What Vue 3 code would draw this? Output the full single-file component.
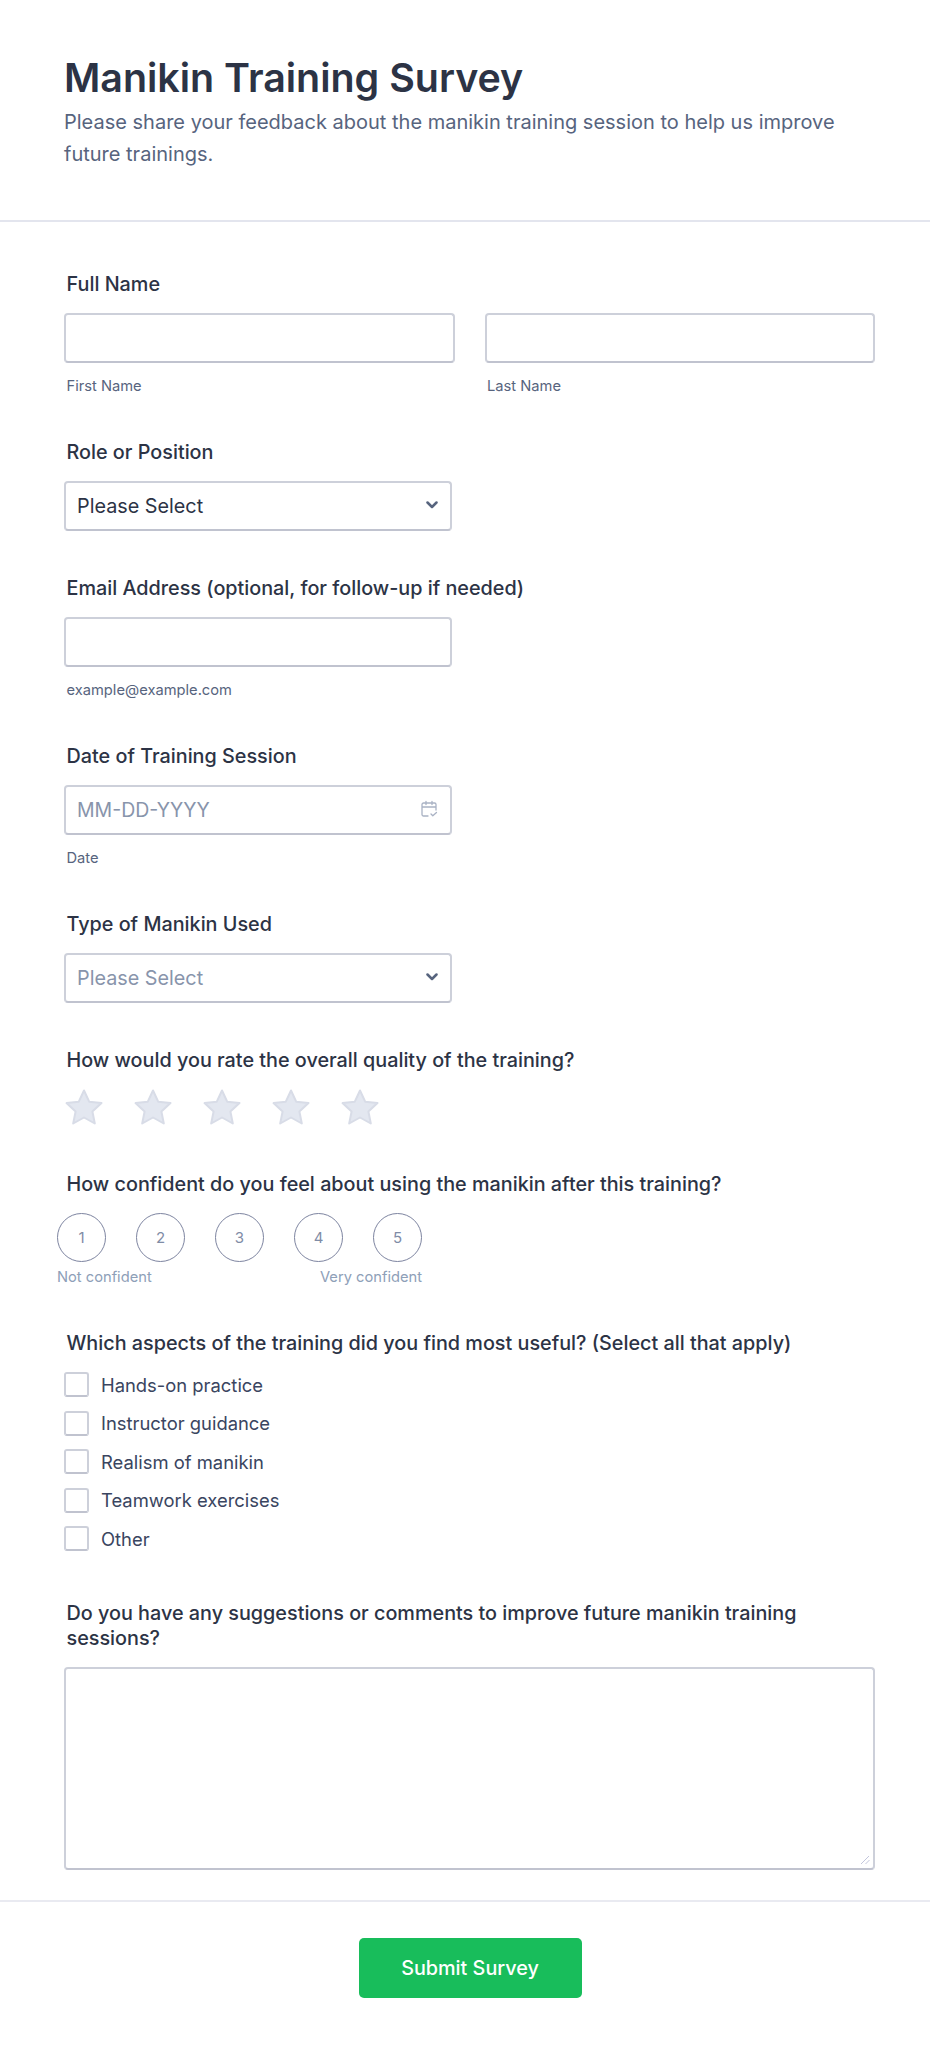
<template>
  <div class="page">
    <header class="head">
      <h1>Manikin Training Survey</h1>
      <p>Please share your feedback about the manikin training session to help us improve future trainings.</p>
    </header>

    <form class="form" @submit.prevent>
      <div class="field">
        <label class="label">Full Name</label>
        <div class="name-row">
          <div class="name-col">
            <input class="input" type="text" />
            <span class="hint">First Name</span>
          </div>
          <div class="name-col">
            <input class="input" type="text" />
            <span class="hint">Last Name</span>
          </div>
        </div>
      </div>

      <div class="field select-field">
        <label class="label">Role or Position</label>
        <div class="select-wrap">
          <select class="input select">
            <option>Please Select</option>
          </select>
          <svg class="chevron" viewBox="0 0 12 8" width="12" height="8"><path d="M1.500 1.500 6 6l4.500-4.500" /></svg>
        </div>
      </div>

      <div class="field">
        <label class="label">Email Address (optional, for follow-up if needed)</label>
        <input class="input short" type="email" />
        <span class="hint">example@example.com</span>
      </div>

      <div class="field">
        <label class="label">Date of Training Session</label>
        <div class="select-wrap">
          <input class="input" type="text" placeholder="MM-DD-YYYY" />
          <svg class="calendar" viewBox="0 0 18 18" width="18" height="18">
            <path d="M8 16H3.500A1.500 1.500 0 0 1 2 14.500V4.500A1.500 1.500 0 0 1 3.500 3h11A1.500 1.500 0 0 1 16 4.500V10M2 7h14M6 1.500v3M12 1.500v3M11 14l1.800 1.800L16.500 12.500" />
          </svg>
        </div>
        <span class="hint">Date</span>
      </div>

      <div class="field select-field">
        <label class="label">Type of Manikin Used</label>
        <div class="select-wrap">
          <select class="input select muted">
            <option>Please Select</option>
          </select>
          <svg class="chevron" viewBox="0 0 12 8" width="12" height="8"><path d="M1.500 1.500 6 6l4.500-4.500" /></svg>
        </div>
      </div>

      <div class="field rating-field">
        <label class="label">How would you rate the overall quality of the training?</label>
        <div class="stars">
          <svg v-for="n in 5" :key="n" viewBox="0 0 38 36" width="38" height="36">
            <path d="M19 1.500 24.200 12.700 36.500 14.100 27.400 22.500 29.800 34.500 19 28.500 8.200 34.500 10.600 22.500 1.500 14.100 13.800 12.700Z" />
          </svg>
        </div>
      </div>

      <div class="field">
        <label class="label">How confident do you feel about using the manikin after this training?</label>
        <div class="scale">
          <div class="circles">
            <span v-for="n in 5" :key="n" class="circle">{{ n }}</span>
          </div>
          <div class="scale-labels">
            <span>Not confident</span>
            <span>Very confident</span>
          </div>
        </div>
      </div>

      <div class="field useful-field">
        <label class="label">Which aspects of the training did you find most useful? (Select all that apply)</label>
        <div class="checks">
          <label v-for="item in aspects" :key="item" class="check">
            <input type="checkbox" />
            <span>{{ item }}</span>
          </label>
        </div>
      </div>

      <div class="field last-field">
        <label class="label">Do you have any suggestions or comments to improve future manikin training sessions?</label>
        <div class="area-wrap">
          <textarea class="area"></textarea>
          <svg class="grip" viewBox="0 0 10 10" width="10" height="10"><path d="M9 1 1 9M9.500 5 5.500 9" /></svg>
        </div>
      </div>
    </form>

    <footer class="foot">
      <button class="submit" type="button">Submit Survey</button>
    </footer>
  </div>
</template>

<script setup>
const aspects = [
  'Hands-on practice',
  'Instructor guidance',
  'Realism of manikin',
  'Teamwork exercises',
  'Other'
]
</script>

<style>
html, body {
  background: #fff;
}
</style>

<style scoped>
.page {
  width: 930px;
  height: 2047px;
  overflow: hidden;
  font-family: Inter, "Liberation Sans", sans-serif;
  color: #2c3345;
  background: #fff;
}

.head {
  height: 222px;
  box-sizing: border-box;
  padding: 56px 55px 0 64px;
  border-bottom: 2px solid #e3e5ee;
}

.head h1 {
  margin: 0;
  font-size: 39.400px;
  line-height: 44px;
  font-weight: 600;
}

.head p {
  margin: 6px 0 0;
  font-size: 20px;
  line-height: 32px;
  color: #57647e;
}

.form {
  padding: 50px 55px 0 64px;
}

.field {
  margin-bottom: 44px;
}

.select-field {
  margin-bottom: 45px;
}

.rating-field {
  margin-bottom: 47px;
}

.label {
  display: block;
  margin: 0 3px 16px 2.500px;
  font-size: 19.800px;
  line-height: 25px;
  font-weight: 500;
}

.name-row {
  display: flex;
  gap: 30px;
}

.name-col {
  flex: 1;
}

.input {
  display: block;
  width: 100%;
  height: 50px;
  box-sizing: border-box;
  padding: 0 11px;
  border: 2px solid #cdd0da;
  border-bottom-color: #c0c3cf;
  border-radius: 4px;
  background: #fff;
  font: inherit;
  font-size: 19.800px;
  color: #2c3345;
  outline: none;
}

.input::placeholder {
  font-size: 19.500px;
  color: #8894ab;
}

.short {
  width: 388px;
}

.hint {
  display: block;
  margin: 13px 3px 0 2.500px;
  font-size: 14.700px;
  line-height: 20px;
  color: #57647e;
}

.select-wrap {
  position: relative;
  width: 388px;
}

.select {
  appearance: none;
}

.muted {
  color: #8894ab;
}

.chevron {
  position: absolute;
  top: 20px;
  right: 14px;
  fill: none;
  stroke: #57647e;
  stroke-width: 2.500;
  stroke-linecap: round;
  stroke-linejoin: round;
}

.calendar {
  position: absolute;
  top: 15px;
  right: 14px;
  fill: none;
  stroke: #a9b2c4;
  stroke-width: 1.300;
  stroke-linecap: round;
  stroke-linejoin: round;
}

.stars {
  display: flex;
  gap: 31px;
  margin-left: 1px;
}

.stars svg {
  fill: #e3e7f0;
  stroke: #d8dce7;
  stroke-width: 2;
  stroke-linejoin: round;
}

.scale {
  width: 365px;
  margin-left: -7px;
}

.circles {
  display: flex;
  gap: 30px;
}

.circle {
  display: flex;
  align-items: center;
  justify-content: center;
  width: 49px;
  height: 49px;
  box-sizing: border-box;
  border: 1px solid #7d84a0;
  border-radius: 50%;
  font-size: 15px;
  color: #7f8ca6;
}

.scale-labels {
  display: flex;
  justify-content: space-between;
  margin-top: 5px;
  font-size: 14.700px;
  line-height: 20px;
  color: #8ea0b8;
}

.checks {
  display: flex;
  flex-direction: column;
  gap: 13.500px;
}

.check {
  display: flex;
  align-items: center;
  gap: 12px;
  height: 25px;
  font-size: 18.400px;
  color: #3a4560;
}

.check input {
  appearance: none;
  width: 25px;
  height: 25px;
  margin: 0;
  box-sizing: border-box;
  border: 2px solid #cdd0da;
  border-bottom-color: #c0c3cf;
  border-radius: 3px;
  background: #fff;
}

.useful-field {
  margin-bottom: 50px;
}

.last-field {
  margin-bottom: 0;
}

.area-wrap {
  position: relative;
}

.area {
  display: block;
  width: 100%;
  height: 203px;
  box-sizing: border-box;
  border: 2px solid #cdd0da;
  border-bottom-color: #c0c3cf;
  border-radius: 4px;
  outline: none;
  resize: none;
}

.grip {
  position: absolute;
  right: 5px;
  bottom: 5px;
  fill: none;
  stroke: #c3c6dc;
  stroke-width: 1;
}

.foot {
  display: flex;
  justify-content: center;
  margin-top: 30px;
  padding: 36px 54px 0 64px;
  border-top: 2px solid #e9eaf1;
}

.submit {
  width: 223px;
  height: 60px;
  border: none;
  border-radius: 5px;
  background: #18bd5b;
  color: #fff;
  font-family: inherit;
  font-size: 19.800px;
  font-weight: 500;
}
</style>
